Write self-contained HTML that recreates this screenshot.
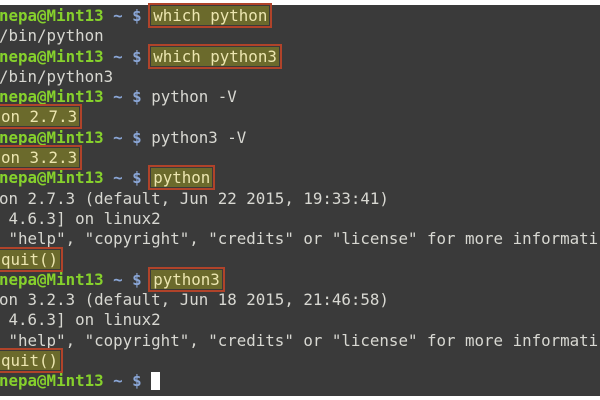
<!DOCTYPE html><html><head><style>
body{margin:0;width:600px;height:400px;background:#fff;overflow:hidden}
#t{position:absolute;top:5px;left:0;width:600px;height:391px;background:#3a3a3a}
pre{margin:0;position:absolute;top:6px;left:-1px;font:15.8px/20.3px "DejaVu Sans Mono","Liberation Mono",monospace;color:#d8d8d2;white-space:pre}
.g{color:#86d12c;font-weight:bold}.b{color:#8aa6d6;font-weight:bold}
.h{background:#6b6a2c;outline:2px solid #b0432a;outline-offset:1px;color:#ece6b0;padding:0 2px}
.c{display:inline-block;width:9px;height:18px;background:#fff;vertical-align:-4px}
</style></head><body><div id="t"></div><pre><span class="g">nepa@Mint13</span> <span class="b">~ $</span> <span class="h">which python</span>
/bin/python
<span class="g">nepa@Mint13</span> <span class="b">~ $</span> <span class="h">which python3</span>
/bin/python3
<span class="g">nepa@Mint13</span> <span class="b">~ $</span> python -V
<span class="h">on 2.7.3</span>
<span class="g">nepa@Mint13</span> <span class="b">~ $</span> python3 -V
<span class="h">on 3.2.3</span>
<span class="g">nepa@Mint13</span> <span class="b">~ $</span> <span class="h">python</span>
on 2.7.3 (default, Jun 22 2015, 19:33:41)
 4.6.3] on linux2
 "help", "copyright", "credits" or "license" for more informati
<span class="h">quit()</span>
<span class="g">nepa@Mint13</span> <span class="b">~ $</span> <span class="h">python3</span>
on 3.2.3 (default, Jun 18 2015, 21:46:58)
 4.6.3] on linux2
 "help", "copyright", "credits" or "license" for more informati
<span class="h">quit()</span>
<span class="g">nepa@Mint13</span> <span class="b">~ $</span> <span class="c"></span></pre></body></html>
